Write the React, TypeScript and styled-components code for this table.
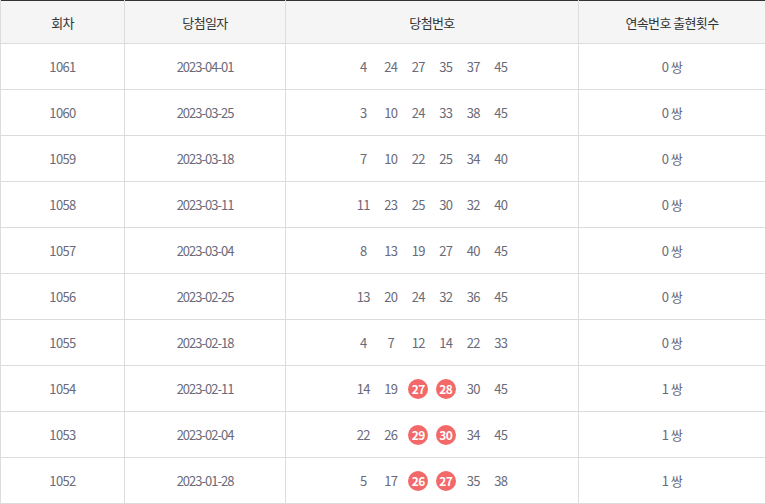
import React from "react";
import styled, { createGlobalStyle } from "styled-components";

const GlobalStyle = createGlobalStyle`
  html, body { margin: 0; padding: 0; background: #fff; }
  body { font-family: "Noto Sans CJK KR", "Noto Sans", sans-serif; }
`;

const Table = styled.table`
  width: 765px;
  table-layout: fixed;
  border-collapse: collapse;
  border-top: 1px solid #333;
  font-size: 13px;
  letter-spacing: -0.6px;
`;

const HeadCell = styled.th`
  height: 42px;
  padding: 0;
  background: #f5f5f5;
  color: #333;
  font-weight: 400;
  text-align: center;
  border: 1px solid #dcdcdc;
  border-top: none;
`;

const Cell = styled.td<{ $tight?: boolean }>`
  height: 45px;
  padding: 0;
  color: #6a6a78;
  text-align: center;
  border: 1px solid #dcdcdc;
  letter-spacing: ${(p) => (p.$tight ? "-1px" : "-0.6px")};
`;

const Numbers = styled.div`
  display: flex;
  justify-content: center;
  align-items: center;
  gap: 7.5px;
`;

const Num = styled.span<{ $hit?: boolean }>`
  display: inline-flex;
  align-items: center;
  justify-content: center;
  width: 20px;
  height: 20px;
  border-radius: 50%;
  background: ${(p) => (p.$hit ? "#f36868" : "transparent")};
  color: ${(p) => (p.$hit ? "#fff" : "#6a6a78")};
  font-weight: ${(p) => (p.$hit ? 700 : 400)};
  font-size: ${(p) => (p.$hit ? "12px" : "13px")};
`;

type Row = { round: number; date: string; nums: number[]; hits: number[]; pairs: number };

const rows: Row[] = [
  { round: 1061, date: "2023-04-01", nums: [4, 24, 27, 35, 37, 45], hits: [], pairs: 0 },
  { round: 1060, date: "2023-03-25", nums: [3, 10, 24, 33, 38, 45], hits: [], pairs: 0 },
  { round: 1059, date: "2023-03-18", nums: [7, 10, 22, 25, 34, 40], hits: [], pairs: 0 },
  { round: 1058, date: "2023-03-11", nums: [11, 23, 25, 30, 32, 40], hits: [], pairs: 0 },
  { round: 1057, date: "2023-03-04", nums: [8, 13, 19, 27, 40, 45], hits: [], pairs: 0 },
  { round: 1056, date: "2023-02-25", nums: [13, 20, 24, 32, 36, 45], hits: [], pairs: 0 },
  { round: 1055, date: "2023-02-18", nums: [4, 7, 12, 14, 22, 33], hits: [], pairs: 0 },
  { round: 1054, date: "2023-02-11", nums: [14, 19, 27, 28, 30, 45], hits: [27, 28], pairs: 1 },
  { round: 1053, date: "2023-02-04", nums: [22, 26, 29, 30, 34, 45], hits: [29, 30], pairs: 1 },
  { round: 1052, date: "2023-01-28", nums: [5, 17, 26, 27, 35, 38], hits: [26, 27], pairs: 1 },
];

export default function App() {
  return (
    <>
      <GlobalStyle />
      <Table>
        <colgroup>
          <col style={{ width: 124 }} />
          <col style={{ width: 161 }} />
          <col style={{ width: 293 }} />
          <col style={{ width: 187 }} />
        </colgroup>
        <thead>
          <tr>
            <HeadCell>회차</HeadCell>
            <HeadCell>당첨일자</HeadCell>
            <HeadCell>당첨번호</HeadCell>
            <HeadCell>연속번호 출현횟수</HeadCell>
          </tr>
        </thead>
        <tbody>
          {rows.map((r) => (
            <tr key={r.round}>
              <Cell>{r.round}</Cell>
              <Cell $tight>{r.date}</Cell>
              <Cell>
                <Numbers>
                  {r.nums.map((n) => (
                    <Num key={n} $hit={r.hits.includes(n)}>
                      {n}
                    </Num>
                  ))}
                </Numbers>
              </Cell>
              <Cell>{r.pairs} 쌍</Cell>
            </tr>
          ))}
        </tbody>
      </Table>
    </>
  );
}
